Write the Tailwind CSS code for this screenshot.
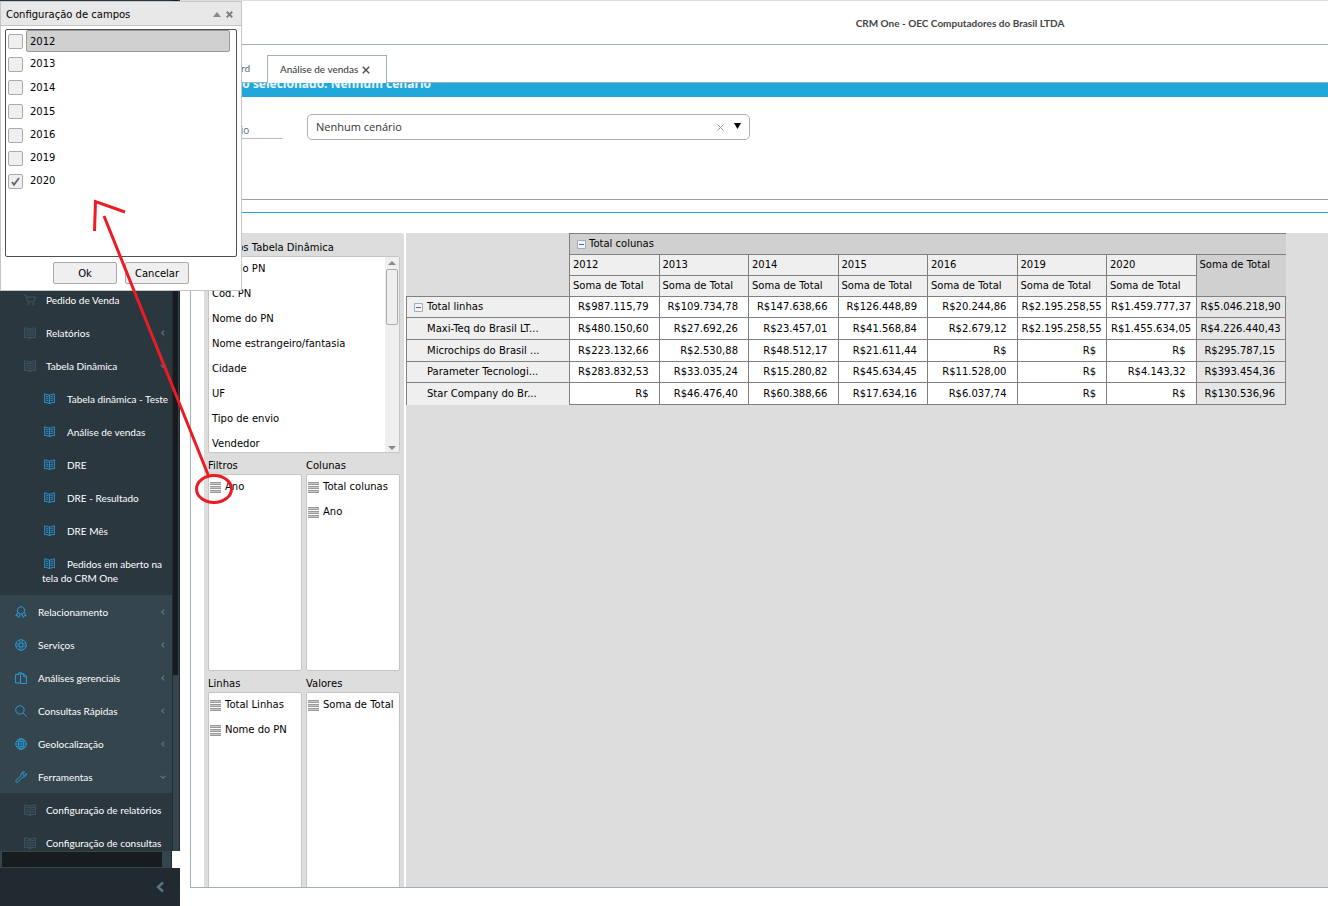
<!DOCTYPE html>
<html lang="pt-BR">
<head>
  <meta charset="UTF-8">
  <title>CRM One - Análise de vendas</title>
  <script src="https://cdn.jsdelivr.net/npm/@tailwindcss/browser@4"></script>
</head>
<body class="relative flex h-screen overflow-hidden bg-white font-['Open_Sans','Noto_Sans',sans-serif] text-black">

  <!-- icons -->
  <svg class="hidden">
    <symbol id="book" viewBox="0 0 12 12"><path d="M6 2.500Q4 .8.7 1v9.300q3.300-.2 5.300 1.200 2-1.400 5.300-1.200V1Q8 .8 6 2.500v9M2 3.300q1.500 0 2.800.7M2 5.500q1.500 0 2.800.7M2 7.700q1.500 0 2.800.7M10 3.300q-1.500 0-2.800.7M10 5.500q-1.500 0-2.800.7M10 7.700q-1.500 0-2.800.7" fill="none" stroke="currentColor" stroke-width="1.100"/></symbol>
    <symbol id="cart" viewBox="0 0 12 12"><path d="M0 1h2l1.800 6.800H10L11.400 3H2.600" fill="none" stroke="currentColor"/><circle cx="4.500" cy="10.200" r="1" fill="none" stroke="currentColor" stroke-width=".8"/><circle cx="9.300" cy="10.200" r="1" fill="none" stroke="currentColor" stroke-width=".8"/></symbol>
    <symbol id="ribbon" viewBox="0 0 12 12"><path d="M3.300 7A3.700 3.700 0 1 1 8.700 7M3 6.300.8 9.800l1.900-.2.900 1.900L5.300 8M9 6.300l2.200 3.500-1.900-.2-.9 1.900L6.700 8M3.500 7.300 6 8.200l2.500-.9" fill="none" stroke="currentColor"/></symbol>
    <symbol id="ring" viewBox="0 0 12 12"><circle cx="6" cy="6" r="5.300" fill="none" stroke="currentColor"/><circle cx="6" cy="6" r="2.100" fill="none" stroke="currentColor"/><path d="M4.800 1v3M7.200 1v3M4.800 8v3M7.200 8v3M1 4.800h3M1 7.200h3M8 4.800h3M8 7.200h3" stroke="currentColor" stroke-width=".8"/></symbol>
    <symbol id="files" viewBox="0 0 12 12"><path d="M4 2.500H.6v8.500h5M3.600.9h3l2 2M5.500 11.500h6v-7L9 1.800H5.500zM3.600.9v1.500M8.800 2v2.800h2.700" fill="none" stroke="currentColor"/></symbol>
    <symbol id="search" viewBox="0 0 12 12"><circle cx="4.900" cy="4.900" r="4.200" fill="none" stroke="currentColor"/><path d="m8 8 3.600 3.500" stroke="currentColor"/></symbol>
    <symbol id="globe" viewBox="0 0 12 12"><circle cx="6" cy="6" r="5.300" fill="none" stroke="currentColor"/><ellipse cx="6" cy="6" rx="2.600" ry="5.300" fill="none" stroke="currentColor"/><path d="M6 .7v10.600M.7 6h10.600M1.600 3.300h8.800M1.600 8.700h8.800" stroke="currentColor" stroke-width=".8"/></symbol>
    <symbol id="wrench" viewBox="0 0 12 12"><path d="M.9 9.500 6 4.600C5.600 2.500 7.200.5 9.500.9L7.900 2.500l.3 1.400 1.500.3 1.600-1.600c.4 2.200-1.600 4-3.700 3.500L2.600 11.200C1.400 11.800.3 10.600.9 9.500z" fill="none" stroke="currentColor"/></symbol>
    <symbol id="left" viewBox="0 0 6 6"><path d="M4.200.6 1.800 3l2.400 2.400" fill="none" stroke="currentColor" stroke-width="1.200"/></symbol>
    <symbol id="down" viewBox="0 0 6 6"><path d="M.6 1.800 3 4.200l2.400-2.400" fill="none" stroke="currentColor" stroke-width="1.200"/></symbol>
    <symbol id="handle" viewBox="0 0 11 11"><path d="M0 0h11v3H0zM0 4h11v3H0zM0 8h11v3H0z" fill="#c8c8c8"/><path d="M0 .5h11M0 2.500h11M0 4.500h11M0 6.500h11M0 8.500h11M0 10.500h11" stroke="#999"/></symbol>
    <symbol id="minus" viewBox="0 0 9 9"><path d="M.5.5h8v8h-8z" fill="#f4f4f4" stroke="#9cb0c4"/><path d="M2 4.500h5" stroke="#666"/></symbol>
  </svg>

  <!-- sidebar -->
  <aside class="flex w-[180px] shrink-0 flex-col font-['Lato','Open_Sans',sans-serif] text-[10px] leading-[14px] text-white">
    <div class="flex min-h-0 flex-1">
      <nav class="flex w-[172px] flex-col overflow-hidden bg-[#35454e]">
        <div class="bg-[#2b373f] pt-[283px]">
          <a href="#" class="flex h-[33px] items-center pl-6"><svg class="mr-[10px] size-3 text-[#3f5662]"><use href="#cart"/></svg>Pedido de Venda</a>
          <a href="#" class="flex h-[33px] items-center pl-6 pr-[6px]"><svg class="mr-[10px] size-3 text-[#3f5662]"><use href="#book"/></svg>Relatórios<svg class="ml-auto size-[6px] text-[#5c7481]"><use href="#left"/></svg></a>
          <a href="#" class="flex h-[33px] items-center pl-6 pr-[6px]"><svg class="mr-[10px] size-3 text-[#3f5662]"><use href="#book"/></svg>Tabela Dinâmica<svg class="ml-auto size-[6px] text-[#5c7481]"><use href="#down"/></svg></a>
          <a href="#" class="block whitespace-nowrap pb-[9px] pl-[42px] pt-[10px]"><svg class="ml-[2px] mr-3 inline-block size-[11px] align-[-1px] text-[#2a8fca]"><use href="#book"/></svg>Tabela dinâmica - Teste</a>
          <a href="#" class="block pb-[9px] pl-[42px] pt-[10px]"><svg class="ml-[2px] mr-3 inline-block size-[11px] align-[-1px] text-[#2a8fca]"><use href="#book"/></svg>Análise de vendas</a>
          <a href="#" class="block pb-[9px] pl-[42px] pt-[10px]"><svg class="ml-[2px] mr-3 inline-block size-[11px] align-[-1px] text-[#2a8fca]"><use href="#book"/></svg>DRE</a>
          <a href="#" class="block pb-[9px] pl-[42px] pt-[10px]"><svg class="ml-[2px] mr-3 inline-block size-[11px] align-[-1px] text-[#2a8fca]"><use href="#book"/></svg>DRE - Resultado</a>
          <a href="#" class="block pb-[9px] pl-[42px] pt-[10px]"><svg class="ml-[2px] mr-3 inline-block size-[11px] align-[-1px] text-[#2a8fca]"><use href="#book"/></svg>DRE Mês</a>
          <a href="#" class="block pb-[10px] pl-[42px] pr-1 pt-[10px]"><svg class="ml-[2px] mr-3 inline-block size-[11px] align-[-1px] text-[#2a8fca]"><use href="#book"/></svg>Pedidos em aberto na tela do CRM One</a>
        </div>
        <a href="#" class="flex h-[33px] shrink-0 items-center pl-[15px] pr-[6px]"><svg class="mr-[11px] size-3 text-[#2a9bd8]"><use href="#ribbon"/></svg>Relacionamento<svg class="ml-auto size-[6px] text-[#5c7481]"><use href="#left"/></svg></a>
        <a href="#" class="flex h-[33px] shrink-0 items-center pl-[15px] pr-[6px]"><svg class="mr-[11px] size-3 text-[#2a9bd8]"><use href="#ring"/></svg>Serviços<svg class="ml-auto size-[6px] text-[#5c7481]"><use href="#left"/></svg></a>
        <a href="#" class="flex h-[33px] shrink-0 items-center pl-[15px] pr-[6px]"><svg class="mr-[11px] size-3 text-[#2a9bd8]"><use href="#files"/></svg>Análises gerenciais<svg class="ml-auto size-[6px] text-[#5c7481]"><use href="#left"/></svg></a>
        <a href="#" class="flex h-[33px] shrink-0 items-center pl-[15px] pr-[6px]"><svg class="mr-[11px] size-3 text-[#2a9bd8]"><use href="#search"/></svg>Consultas Rápidas<svg class="ml-auto size-[6px] text-[#5c7481]"><use href="#left"/></svg></a>
        <a href="#" class="flex h-[33px] shrink-0 items-center pl-[15px] pr-[6px]"><svg class="mr-[11px] size-3 text-[#2a9bd8]"><use href="#globe"/></svg>Geolocalização<svg class="ml-auto size-[6px] text-[#5c7481]"><use href="#left"/></svg></a>
        <a href="#" class="flex h-[33px] shrink-0 items-center pl-[15px] pr-[6px]"><svg class="mr-[11px] size-3 text-[#2a9bd8]"><use href="#wrench"/></svg>Ferramentas<svg class="ml-auto size-[6px] text-[#5c7481]"><use href="#down"/></svg></a>
        <div class="bg-[#2b373f]">
          <a href="#" class="flex h-[33px] items-center pl-6"><svg class="mr-[10px] size-3 text-[#3f5662]"><use href="#book"/></svg>Configuração de relatórios</a>
          <a href="#" class="flex h-[33px] items-center pl-6"><svg class="mr-[10px] size-3 text-[#3f5662]"><use href="#book"/></svg>Configuração de consultas</a>
        </div>
      </nav>
      <div class="w-2 border-x border-[#222b31] bg-[#35454e] pr-px">
        <div class="h-[675px] bg-[#151b1f]"></div>
      </div>
    </div>
    <div class="h-[17px] w-[172px] border-r border-[#222b31] bg-[#35454e] py-px pl-[2px] pr-[9px]">
      <div class="h-full bg-[#171c1f]"></div>
    </div>
    <div class="flex h-[38px] items-center justify-end bg-[#222a31] pr-[14px]">
      <button type="button" aria-label="Recolher menu"><svg class="size-3" viewBox="0 0 12 12"><path d="M9 1.500 4 6l5 4.500" fill="none" stroke="#5b7684" stroke-width="2.400"/></svg></button>
    </div>
  </aside>

  <!-- main -->
  <main class="flex min-w-0 flex-1 flex-col border-t border-[#dcdce2]">
    <header class="flex h-11 shrink-0 items-center justify-center border-b border-[#9fb2bc] pl-[412px] pt-px">
      <h1 class="font-['Lato','Open_Sans',sans-serif] text-[10px] font-bold text-[#444]">CRM One - OEC Computadores do Brasil LTDA</h1>
    </header>

    <div class="flex h-[38px] shrink-0 items-end border-b border-[#9fb2bc] font-['Lato','Open_Sans',sans-serif] text-[10px]">
      <a href="#" class="flex h-7 w-[87px] items-center justify-end pr-[17px] pt-px text-[#5a6b75]">Dashboard</a>
      <div class="-mb-px flex h-7 w-[120px] items-center gap-1 border border-b-0 border-[#9fb2bc] bg-white pl-3 text-[#333]">
        <a href="#">Análise de vendas</a>
        <button type="button" aria-label="Fechar aba"><svg class="size-2" viewBox="0 0 8 8"><path d="m.8.8 6.400 6.400M7.200.8.8 7.200" stroke="#555" stroke-width="1.500"/></svg></button>
      </div>
    </div>

    <section class="ml-[10px] mb-[18px] flex min-h-0 flex-1 flex-col border-b border-l border-[#9fb2bc]">
      <div class="flex h-[14px] shrink-0 items-end overflow-hidden bg-[#21a8da]">
        <p class="w-[240px] whitespace-nowrap text-right text-[12px] font-bold leading-[26px] text-white/90">Cenário selecionado: Nenhum cenário</p>
      </div>
      <div class="flex h-[103px] shrink-0 items-start border-b border-[#a0a0a0] pt-[17px]">
        <label for="scenario" class="ml-[10px] mr-6 flex h-[25px] w-[82px] items-end border-b border-[#bbb] pl-3 text-[10px] leading-4 text-[#5a6b75]">Cenário</label>
        <div class="flex h-[26px] w-[443px] items-center rounded-[5px] border border-[#b0b0b0] pl-2 pr-2">
          <select id="scenario" class="h-full flex-1 appearance-none bg-white text-[11px] text-[#333] outline-none"><option>Nenhum cenário</option></select>
          <button type="button" aria-label="Limpar" class="mr-[10px]"><svg class="size-[7px]" viewBox="0 0 7 7"><path d="m.7.7 5.600 5.600M6.300.7.7 6.300" stroke="#999"/></svg></button>
          <svg class="mb-[3px] size-[7px]" viewBox="0 0 7 7"><path d="M0 1h7L3.500 7z"/></svg>
        </div>
      </div>
      <div class="h-[13px] shrink-0 border-b border-[#21a8da]"></div>

      <div class="mt-5 flex min-h-0 flex-1 gap-[2px] pl-[13px] font-['DejaVu_Sans',sans-serif] text-[10px]">
        <!-- fields -->
        <div class="flex w-[200px] shrink-0 flex-col rounded-t-[2px] bg-[#ddd] pl-1 pr-1">
          <h2 class="h-[23px] pt-2 leading-[14px]">Campos Tabela Dinâmica</h2>
          <div class="flex h-[197px] shrink-0 rounded-[2px] border border-[#c5c5c5] bg-white">
            <ul class="flex-1 overflow-hidden pl-[3px] leading-[23px] [&_li]:h-[25px]">
              <li>Tipo do PN</li>
              <li>Cod. PN</li>
              <li>Nome do PN</li>
              <li>Nome estrangeiro/fantasia</li>
              <li>Cidade</li>
              <li>UF</li>
              <li>Tipo de envio</li>
              <li>Vendedor</li>
            </ul>
            <div class="flex w-[14px] flex-col items-center justify-between bg-[#efefef] py-1">
              <div class="flex w-full flex-col items-center gap-1">
                <svg class="h-1 w-2" viewBox="0 0 8 4"><path d="M0 4h8L4 0z" fill="#888"/></svg>
                <div class="h-[56px] w-3 rounded-[2px] border border-[#aaa] bg-[#efefef]"></div>
              </div>
              <svg class="mb-[-2px] h-1 w-2" viewBox="0 0 8 4"><path d="M0 0h8L4 4z" fill="#888"/></svg>
            </div>
          </div>
          <div class="grid min-h-0 flex-1 grid-cols-2 grid-rows-[218px_1fr] gap-x-1 leading-[25px] [&_li]:flex [&_li]:h-[25px] [&_li]:items-center [&_li]:whitespace-nowrap [&_li]:leading-[27px]">
            <div class="flex flex-col">
              <h3 class="h-[21px]">Filtros</h3>
              <ul class="h-[197px] overflow-hidden rounded-[2px] border border-[#c5c5c5] bg-white">
                <li><svg class="ml-px mr-1 size-[11px] shrink-0"><use href="#handle"/></svg><span class="pb-[2px]">Ano</span></li>
              </ul>
            </div>
            <div class="flex flex-col">
              <h3 class="h-[21px]">Colunas</h3>
              <ul class="h-[197px] overflow-hidden rounded-[2px] border border-[#c5c5c5] bg-white">
                <li><svg class="ml-px mr-1 size-[11px] shrink-0"><use href="#handle"/></svg><span class="pb-[2px]">Total colunas</span></li>
                <li><svg class="ml-px mr-1 size-[11px] shrink-0"><use href="#handle"/></svg><span class="pb-[2px]">Ano</span></li>
              </ul>
            </div>
            <div class="flex min-h-0 flex-col">
              <h3 class="h-[21px]">Linhas</h3>
              <ul class="flex-1 overflow-hidden rounded-t-[2px] border border-b-0 border-[#c5c5c5] bg-white">
                <li><svg class="ml-px mr-1 size-[11px] shrink-0"><use href="#handle"/></svg><span class="pb-[2px]">Total Linhas</span></li>
                <li><svg class="ml-px mr-1 size-[11px] shrink-0"><use href="#handle"/></svg><span class="pb-[2px]">Nome do PN</span></li>
              </ul>
            </div>
            <div class="flex min-h-0 flex-col">
              <h3 class="h-[21px]">Valores</h3>
              <ul class="flex-1 overflow-hidden rounded-t-[2px] border border-b-0 border-[#c5c5c5] bg-white">
                <li><svg class="ml-px mr-1 size-[11px] shrink-0"><use href="#handle"/></svg><span class="pb-[2px]">Soma de Total</span></li>
              </ul>
            </div>
          </div>
        </div>

        <!-- pivot table -->
        <div class="min-w-0 flex-1 overflow-hidden bg-[#ddd]">
          <table class="w-[880px] table-fixed border-collapse whitespace-nowrap text-right leading-[14px] [&_td]:border [&_td]:border-[#808080] [&_td]:bg-white [&_td]:p-0 [&_td]:pl-1 [&_td]:pr-[10px] [&_th]:border [&_th]:border-[#808080] [&_th]:bg-[#efefef] [&_th]:p-0 [&_th]:pl-[3px] [&_th]:text-left [&_th]:font-normal [&_td:last-child]:bg-[#e6e6e6] [&_tr]:h-[21px]">
            <colgroup><col class="w-[163px]"><col><col><col><col><col><col><col><col></colgroup>
            <thead>
              <tr>
                <td rowspan="3" class="border-l-0! border-t-0! bg-[#ddd]!"></td>
                <th colspan="8" class="border-r-0! bg-[#d0d0d0]! pl-[7px]!"><span class="flex items-center gap-[3px]"><svg class="size-[9px]"><use href="#minus"/></svg>Total colunas</span></th>
              </tr>
              <tr>
                <th>2012</th><th>2013</th><th>2014</th><th>2015</th><th>2016</th><th>2019</th><th>2020</th>
                <th rowspan="2" class="border-r-0! bg-[#d0d0d0]! pt-[3px]! align-top">Soma de Total</th>
              </tr>
              <tr>
                <th>Soma de Total</th><th>Soma de Total</th><th>Soma de Total</th><th>Soma de Total</th><th>Soma de Total</th><th>Soma de Total</th><th>Soma de Total</th>
              </tr>
            </thead>
            <tbody>
              <tr>
                <th class="pl-[7px]!"><span class="flex items-center gap-1"><svg class="size-[9px]"><use href="#minus"/></svg>Total linhas</span></th>
                <td>R$987.115,79</td><td>R$109.734,78</td><td>R$147.638,66</td><td>R$126.448,89</td><td>R$20.244,86</td><td>R$2.195.258,55</td><td>R$1.459.777,37</td><td>R$5.046.218,90</td>
              </tr>
              <tr class="h-[22px]!">
                <th class="pl-5!">Maxi-Teq do Brasil LT...</th>
                <td>R$480.150,60</td><td>R$27.692,26</td><td>R$23.457,01</td><td>R$41.568,84</td><td>R$2.679,12</td><td>R$2.195.258,55</td><td>R$1.455.634,05</td><td>R$4.226.440,43</td>
              </tr>
              <tr class="h-[22px]!">
                <th class="pl-5!">Microchips do Brasil ...</th>
                <td>R$223.132,66</td><td>R$2.530,88</td><td>R$48.512,17</td><td>R$21.611,44</td><td>R$</td><td>R$</td><td>R$</td><td>R$295.787,15</td>
              </tr>
              <tr>
                <th class="pl-5!">Parameter Tecnologi...</th>
                <td>R$283.832,53</td><td>R$33.035,24</td><td>R$15.280,82</td><td>R$45.634,45</td><td>R$11.528,00</td><td>R$</td><td>R$4.143,32</td><td>R$393.454,36</td>
              </tr>
              <tr class="h-[22px]!">
                <th class="border-b-0! pl-5!">Star Company do Br...</th>
                <td>R$</td><td>R$46.476,40</td><td>R$60.388,66</td><td>R$17.634,16</td><td>R$6.037,74</td><td>R$</td><td>R$</td><td>R$130.536,96</td>
              </tr>
            </tbody>
          </table>
        </div>
      </div>
    </section>
  </main>

  <!-- field settings dialog -->
  <div role="dialog" aria-labelledby="dlg-title" class="absolute left-0 top-px w-[242px] border border-[#c5c5c5] bg-white font-['DejaVu_Sans',sans-serif] text-[10px]">
    <div class="flex h-6 items-center border-b border-[#c5c5c5] bg-[#e8e8e8] pl-[5px] pr-2 pt-[2px]">
      <h2 id="dlg-title" class="flex-1">Configuração de campos</h2>
      <button type="button" aria-label="Minimizar" class="mr-[5px]"><svg class="h-[5px] w-2" viewBox="0 0 8 5"><path d="M0 5h8L4 0z" fill="#888"/></svg></button>
      <button type="button" aria-label="Fechar"><svg class="size-[7px]" viewBox="0 0 7 7"><path d="m.8.8 5.400 5.400M6.200.8.8 6.200" stroke="#808080" stroke-width="2"/></svg></button>
    </div>
    <div class="mx-1 mt-[3px] flex h-[228px] flex-col gap-px rounded-[2px] border border-[#505050] pl-[2px] pr-[6px] leading-5">
      <label class="flex h-[22px] items-center gap-[3px]"><input type="checkbox" class="size-[15px] appearance-none rounded-[2px] border border-[#aaa] bg-[#efefef]"><span class="h-[22px] flex-1 rounded-[2px] border border-[#999] bg-[#d0d0d0] pl-[3px] pt-px">2012</span></label>
      <label class="flex h-[22px] items-center gap-[7px]"><input type="checkbox" class="size-[15px] appearance-none rounded-[2px] border border-[#aaa] bg-[#efefef]">2013</label>
      <label class="flex h-[23px] items-center gap-[7px]"><input type="checkbox" class="size-[15px] appearance-none rounded-[2px] border border-[#aaa] bg-[#efefef]">2014</label>
      <label class="flex h-[23px] items-center gap-[7px]"><input type="checkbox" class="size-[15px] appearance-none rounded-[2px] border border-[#aaa] bg-[#efefef]">2015</label>
      <label class="flex h-[22px] items-center gap-[7px]"><input type="checkbox" class="size-[15px] appearance-none rounded-[2px] border border-[#aaa] bg-[#efefef]">2016</label>
      <label class="flex h-[22px] items-center gap-[7px]"><input type="checkbox" class="size-[15px] appearance-none rounded-[2px] border border-[#aaa] bg-[#efefef]">2019</label>
      <label class="flex h-[22px] items-center gap-[7px]">
        <span class="grid size-[15px] place-items-center">
          <input type="checkbox" checked class="peer col-start-1 row-start-1 size-[15px] appearance-none rounded-[2px] border border-[#aaa] bg-[#efefef]">
          <svg class="invisible col-start-1 row-start-1 size-[9px] peer-checked:visible" viewBox="0 0 9 9"><path d="m1 5 2 2.800L8 1" fill="none" stroke="#666" stroke-width="1.800"/></svg>
        </span>2020
      </label>
    </div>
    <div class="flex justify-center gap-2 pb-[6px] pt-[5px]">
      <button type="button" class="h-[22px] w-16 rounded-[2px] border border-[#aaa] bg-[#efefef]">Ok</button>
      <button type="button" class="h-[22px] w-16 rounded-[2px] border border-[#aaa] bg-[#efefef]">Cancelar</button>
    </div>
  </div>

  <!-- red marker -->
  <svg class="pointer-events-none absolute left-[80px] top-[190px] h-[320px] w-[160px]" viewBox="80 190 160 320" fill="none" stroke="#ed1c24" stroke-width="3">
    <path d="m94.500 231 1-29.500L125 212M104 216l105 261"/>
    <ellipse cx="214" cy="489" rx="17.500" ry="13.500"/>
  </svg>
</body>
</html>
